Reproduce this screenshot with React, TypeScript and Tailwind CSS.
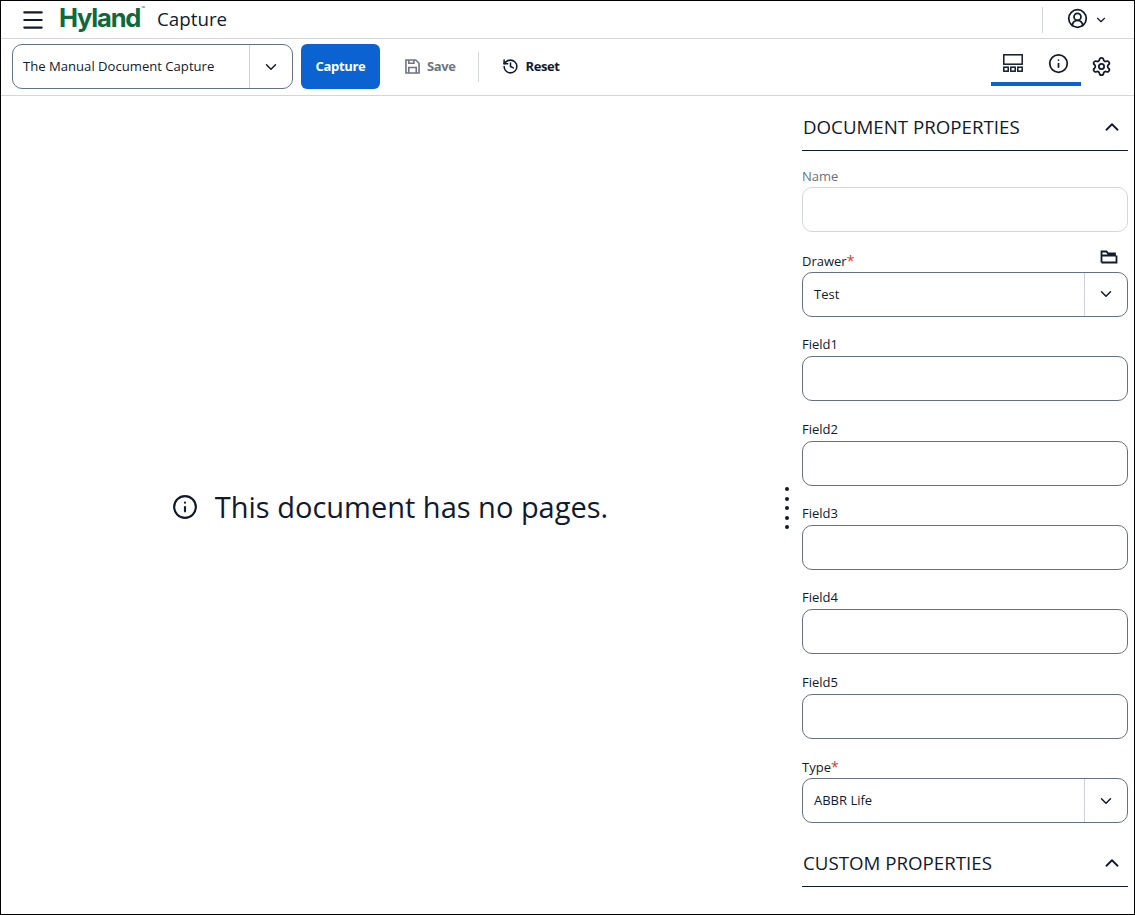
import { ChevronDown, ChevronUp, Info, Settings, History, CircleUserRound, Menu } from "lucide-react"

const font = "font-['Open_Sans',sans-serif]"

function Field({ label, required, disabled, folder, value }: { label: string; required?: boolean; disabled?: boolean; folder?: boolean; value?: string }) {
  return (
    <div className="mb-[17.4px]">
      <div className="h-[22px] flex items-start justify-between">
        <span className={`text-[13px] leading-[21px] ${disabled ? "mt-[1px] text-[#6b7280]" : "text-[#111a2e]"}`}>
          {label}
          {required && <span className="text-[#d0402f] text-[14px]">*</span>}
        </span>
        {folder && (
          <svg width="18" height="14" viewBox="0 0 18 14" fill="none" stroke="#111a2e" strokeWidth="1.8" className="mr-[10px]">
            <path d="M1.5 12.5V1.5H6.5L8 3.5H15V5.5H1.5M1.5 12.5H16.5V5.5" />
          </svg>
        )}
      </div>
      {value !== undefined ? (
        <div className="h-[45px] rounded-[10px] border border-[#667085] flex items-center bg-white">
          <span className="flex-1 pl-[11px] text-[13px] leading-[21px] text-[#111a2e]">{value}</span>
          <span className="w-[43px] h-full border-l border-[#cfd2da] flex items-center justify-center pr-[1px]">
            <ChevronDown size={18} strokeWidth={2} className="text-[#111a2e]" />
          </span>
        </div>
      ) : (
        <div className={`h-[45px] rounded-[10px] border bg-white ${disabled ? "border-[#d5d7dc]" : "border-[#667085]"}`} />
      )}
    </div>
  )
}

function SectionHead({ title, first }: { title: string; first?: boolean }) {
  return (
    <div className={`border-b border-[#111a2e] flex items-center justify-between ${first ? "h-[55px] pt-[8px]" : "h-[46.4px]"}`}>
      <span className="text-[18.72px] text-[#111a2e] leading-[24px] ml-[1px]">{title}</span>
      <ChevronUp size={22} strokeWidth={2} className="text-[#111a2e] mr-[5px]" />
    </div>
  )
}

export default function App() {
  return (
    <div className={`${font} w-[1135px] h-[915px] border border-black bg-white flex flex-col overflow-hidden text-[#111a2e]`}>
      <header className="h-[37px] shrink-0 border-b border-[#d5d5dc] flex items-center box-content">
        <Menu size={26} strokeWidth={2} className="ml-[19px]" />
        <span className="ml-[13px] font-['Inter',sans-serif] font-bold text-[25.5px] tracking-[-1.2px] text-[#0d6a3c] leading-none mb-[3px]">Hyland</span>
        <span className="text-[5px] leading-none text-[#0d6a3c] mb-[22px] ml-[1px]">™</span>
        <span className="ml-[12px] text-[18.75px]">Capture</span>
        <div className="ml-auto h-[26px] border-l border-[#d5d5dc] mr-[24px]" />
        <CircleUserRound size={21} strokeWidth={2} className="mb-[2px]" />
        <ChevronDown size={14} strokeWidth={2} className="ml-[6px] mr-[26px]" />
      </header>

      <div className="h-[55px] shrink-0 border-b border-[#d5d5dc] flex items-center box-content pb-[1px]">
        <div className="ml-[11px] w-[281px] h-[45px] rounded-[10px] border border-[#667085] flex items-center">
          <span className="flex-1 pl-[10px] text-[13.1px]">The Manual Document Capture</span>
          <span className="w-[43px] h-full border-l border-[#cfd2da] flex items-center justify-center">
            <ChevronDown size={18} strokeWidth={2} />
          </span>
        </div>
        <button className="ml-[8px] w-[79px] h-[45px] rounded-[6px] bg-[#0b62d1] text-white text-[13px] tracking-[-0.3px] font-bold">Capture</button>
        <div className="ml-[25px] flex items-center text-[#6f7580]">
          <svg width="15" height="15" viewBox="0 0 16 16" fill="none" stroke="currentColor" strokeWidth="1.7">
            <path d="M1 1H11.5L15 4.5V15H1Z" />
            <path d="M4 15V9H12V15" />
            <path d="M4 1V4.5H9.5V1" />
          </svg>
          <span className="ml-[7px] text-[13px] tracking-[-0.4px] font-bold">Save</span>
        </div>
        <div className="ml-[22px] h-[30px] border-l border-[#d5d5dc]" />
        <div className="ml-[23px] flex items-center">
          <History size={17} strokeWidth={2.2} />
          <span className="ml-[7px] text-[13px] tracking-[-0.4px] font-bold">Reset</span>
        </div>
        <div className="ml-auto relative h-full w-[90px] flex items-center justify-center gap-[25px]">
          <svg width="20" height="18" viewBox="0 0 20 18" fill="none" stroke="#111a2e" strokeWidth="1.5" className="mb-[7px]">
            <rect x="0.8" y="0.8" width="18.4" height="9.4" />
            <rect x="0.8" y="13.2" width="4.4" height="4" />
            <rect x="7.8" y="13.2" width="4.4" height="4" />
            <rect x="14.8" y="13.2" width="4.4" height="4" />
          </svg>
          <Info size={21} strokeWidth={2} className="mb-[7px]" />
          <div className="absolute left-0 right-0 bottom-[8px] h-[4px] bg-[#0b62d1]" />
        </div>
        <Settings size={21} strokeWidth={2} className="ml-[10px] mr-[22px]" />
      </div>

      <div className="flex-1 flex min-h-0">
        <main className="flex-1 flex items-center justify-center relative">
          <div className="flex items-center mr-[23px] mt-[4px]">
            <Info size={26} strokeWidth={2} />
            <span className="ml-[17px] text-[29px] leading-[36px]">This document has no pages.</span>
          </div>
          <div className="absolute right-[13px] top-[391px] flex flex-col gap-[5.5px]">
            {[0, 1, 2, 3, 4].map((i) => (
              <span key={i} className="w-[4px] h-[4px] rounded-full bg-[#111a2e]" />
            ))}
          </div>
        </main>
        <aside className="w-[326px] mr-[6px] shrink-0">
          <SectionHead title="DOCUMENT PROPERTIES" first />
          <div className="pt-[14.4px]">
            <Field label="Name" disabled />
            <Field label="Drawer" required folder value="Test" />
            <Field label="Field1" />
            <Field label="Field2" />
            <Field label="Field3" />
            <Field label="Field4" />
            <Field label="Field5" />
            <Field label="Type" required value="ABBR Life" />
          </div>
          <SectionHead title="CUSTOM PROPERTIES" />
        </aside>
      </div>
    </div>
  )
}
